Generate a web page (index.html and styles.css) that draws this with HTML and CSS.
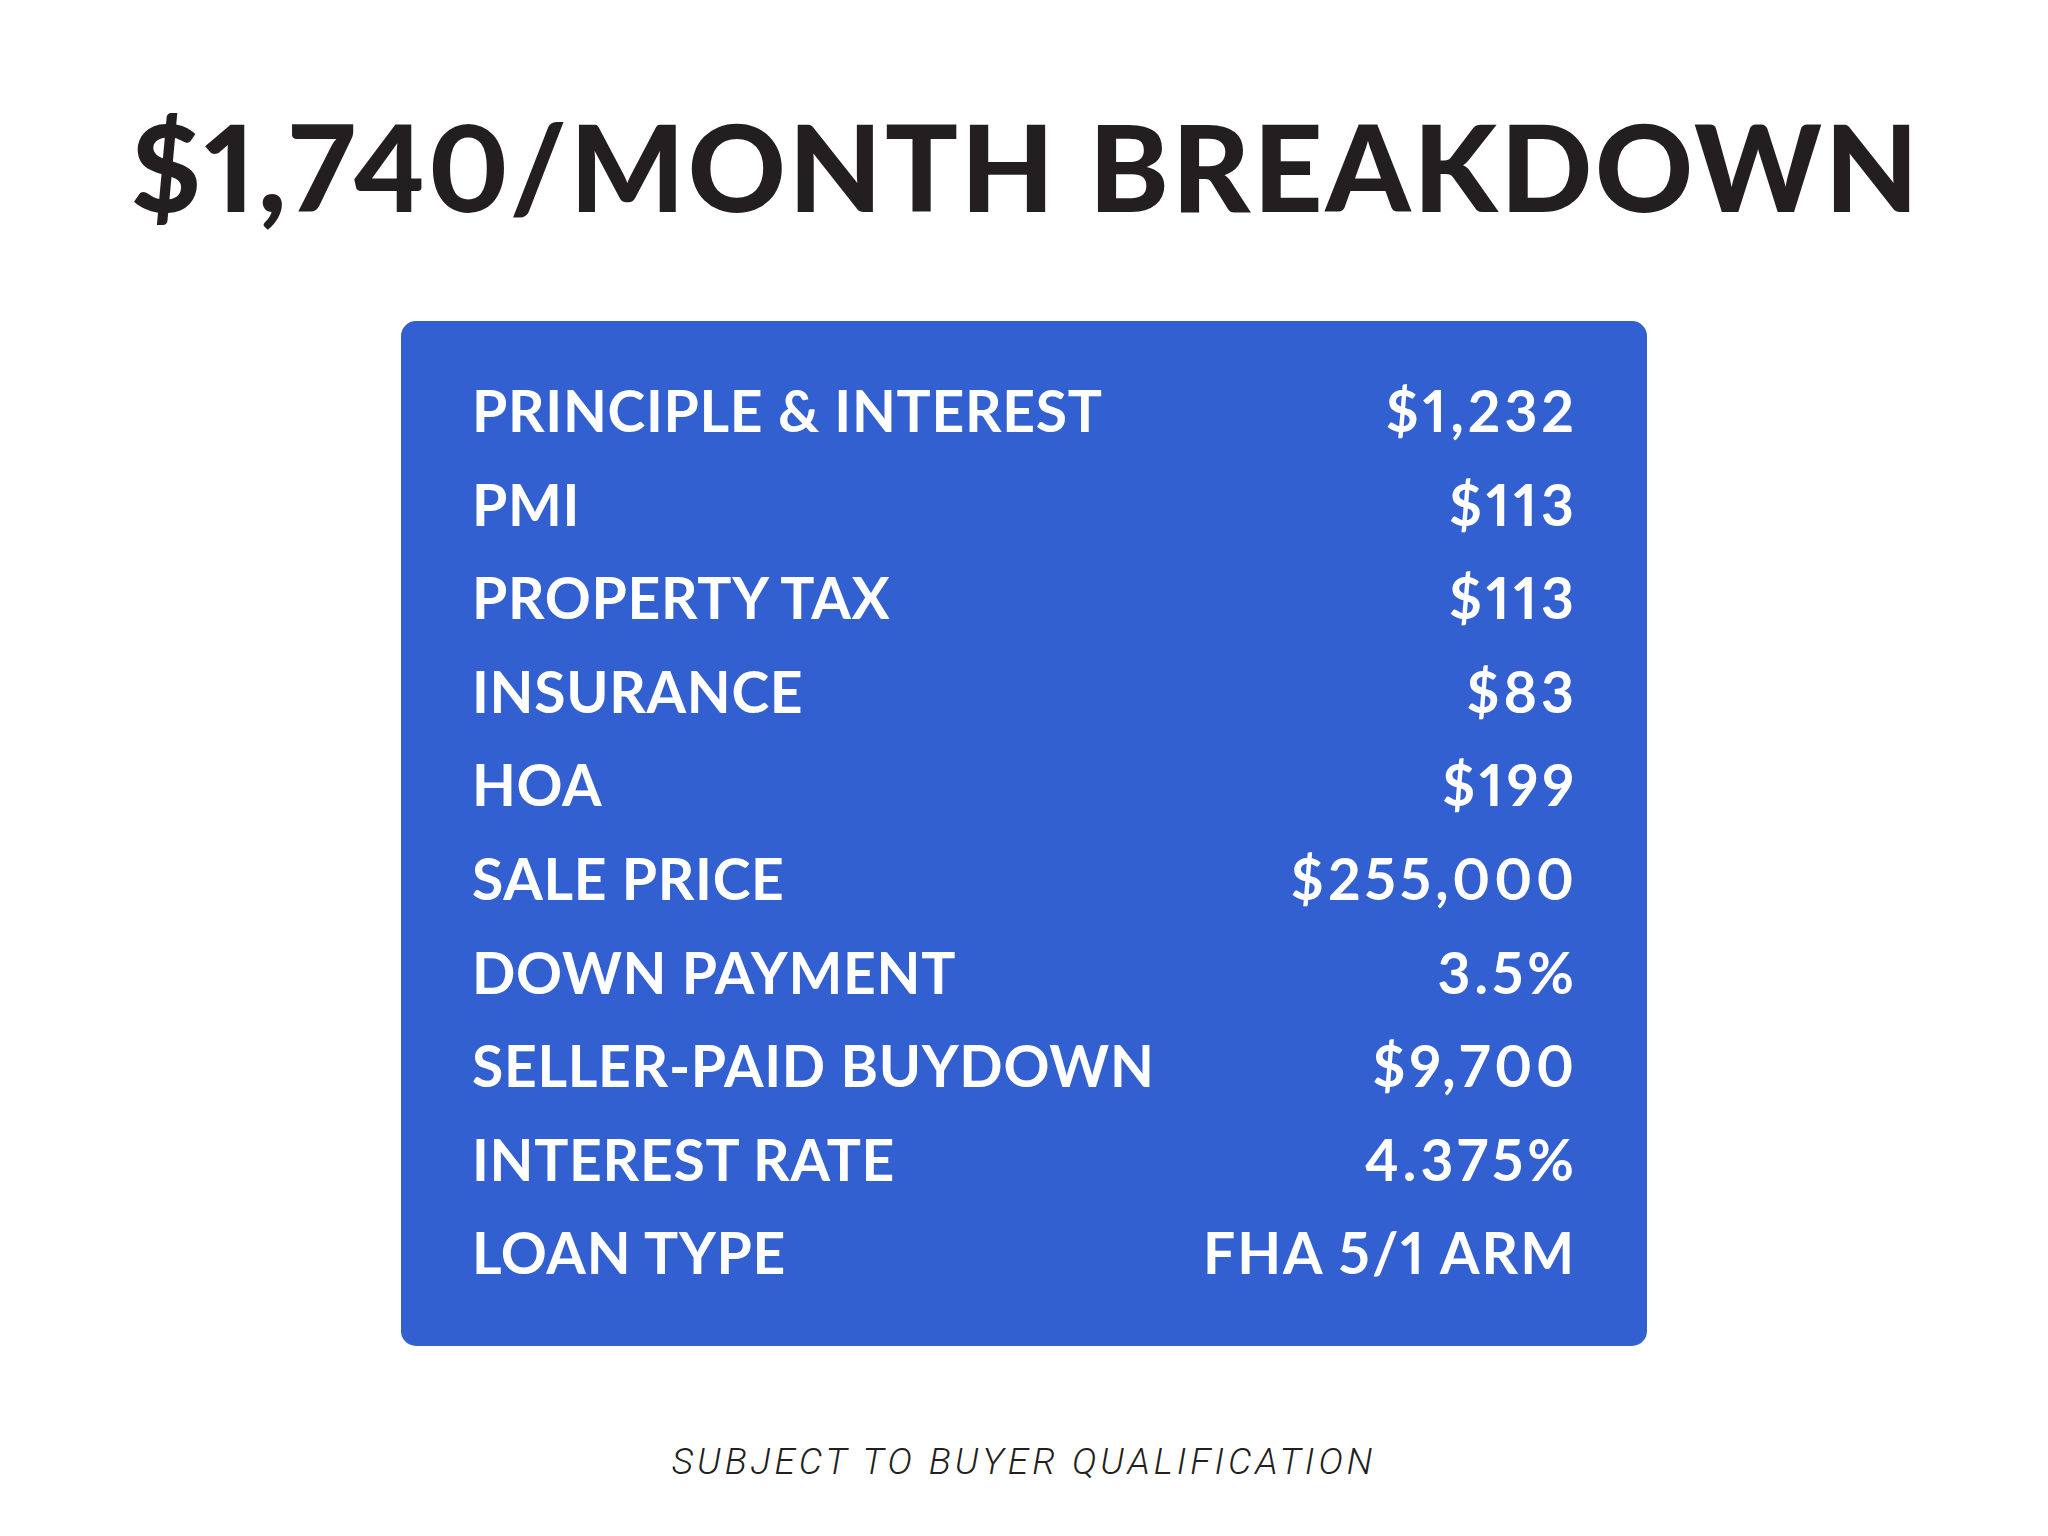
FILE: index.html
```html
<!DOCTYPE html>
<html lang="en">
<head>
<meta charset="utf-8">
<title>$1,740/Month Breakdown</title>
<link rel="stylesheet" href="styles.css">
</head>
<body>
<main class="page">
  <h1 class="title">$1,740/MONTH BREAKDOWN</h1>
  <section class="card">
    <div class="row"><span class="label">PRINCIPLE &amp; INTEREST</span><span class="value num">$1,232</span></div>
    <div class="row"><span class="label">PMI</span><span class="value num">$113</span></div>
    <div class="row"><span class="label">PROPERTY TAX</span><span class="value num">$113</span></div>
    <div class="row"><span class="label">INSURANCE</span><span class="value num">$83</span></div>
    <div class="row"><span class="label">HOA</span><span class="value num">$199</span></div>
    <div class="row"><span class="label">SALE PRICE</span><span class="value num">$255,000</span></div>
    <div class="row"><span class="label">DOWN PAYMENT</span><span class="value num">3.5%</span></div>
    <div class="row"><span class="label">SELLER-PAID BUYDOWN</span><span class="value num">$9,700</span></div>
    <div class="row"><span class="label">INTEREST RATE</span><span class="value num">4.375%</span></div>
    <div class="row"><span class="label">LOAN TYPE</span><span class="value">FHA 5/1 ARM</span></div>
  </section>
  <p class="note">SUBJECT TO BUYER QUALIFICATION</p>
</main>
</body>
</html>
```
FILE: styles.css
```css
html, body {
  margin: 0;
  padding: 0;
  background: #ffffff;
}

.page {
  width: 2048px;
  height: 1536px;
  display: flex;
  flex-direction: column;
  align-items: center;
  font-family: "Lato", "Liberation Sans", sans-serif;
}

.title {
  margin: 105px -3px 0 0;
  font-family: "Lato", sans-serif;
  font-weight: 900;
  font-size: 121px;
  line-height: 121px;
  letter-spacing: 2.8px;
  color: #231f20;
  white-space: nowrap;
  font-variant-numeric: proportional-nums;
}

.card {
  margin-top: 95px;
  width: 1246px;
  box-sizing: border-box;
  padding: 43px 73px 46px 71px;
  background: #3360d0;
  border-radius: 15px;
  display: flex;
  flex-direction: column;
}

.row {
  display: flex;
  justify-content: space-between;
  align-items: baseline;
  height: 93.6px;
  line-height: 93.6px;
  font-size: 57px;
  font-weight: 700;
  color: #ffffff;
  white-space: nowrap;
  font-variant-numeric: proportional-nums;
}

.label {
  letter-spacing: 0.7px;
}

.value {
  letter-spacing: 2px;
  margin-right: -2px;
}

.value.num {
  letter-spacing: 4px;
  margin-right: -4px;
}

.note {
  margin: 97px 0 0 0;
  font-family: "Roboto", "Liberation Sans", sans-serif;
  font-style: italic;
  font-weight: 300;
  font-size: 37px;
  line-height: 37px;
  letter-spacing: 4px;
  color: #231f20;
  white-space: nowrap;
}
```
